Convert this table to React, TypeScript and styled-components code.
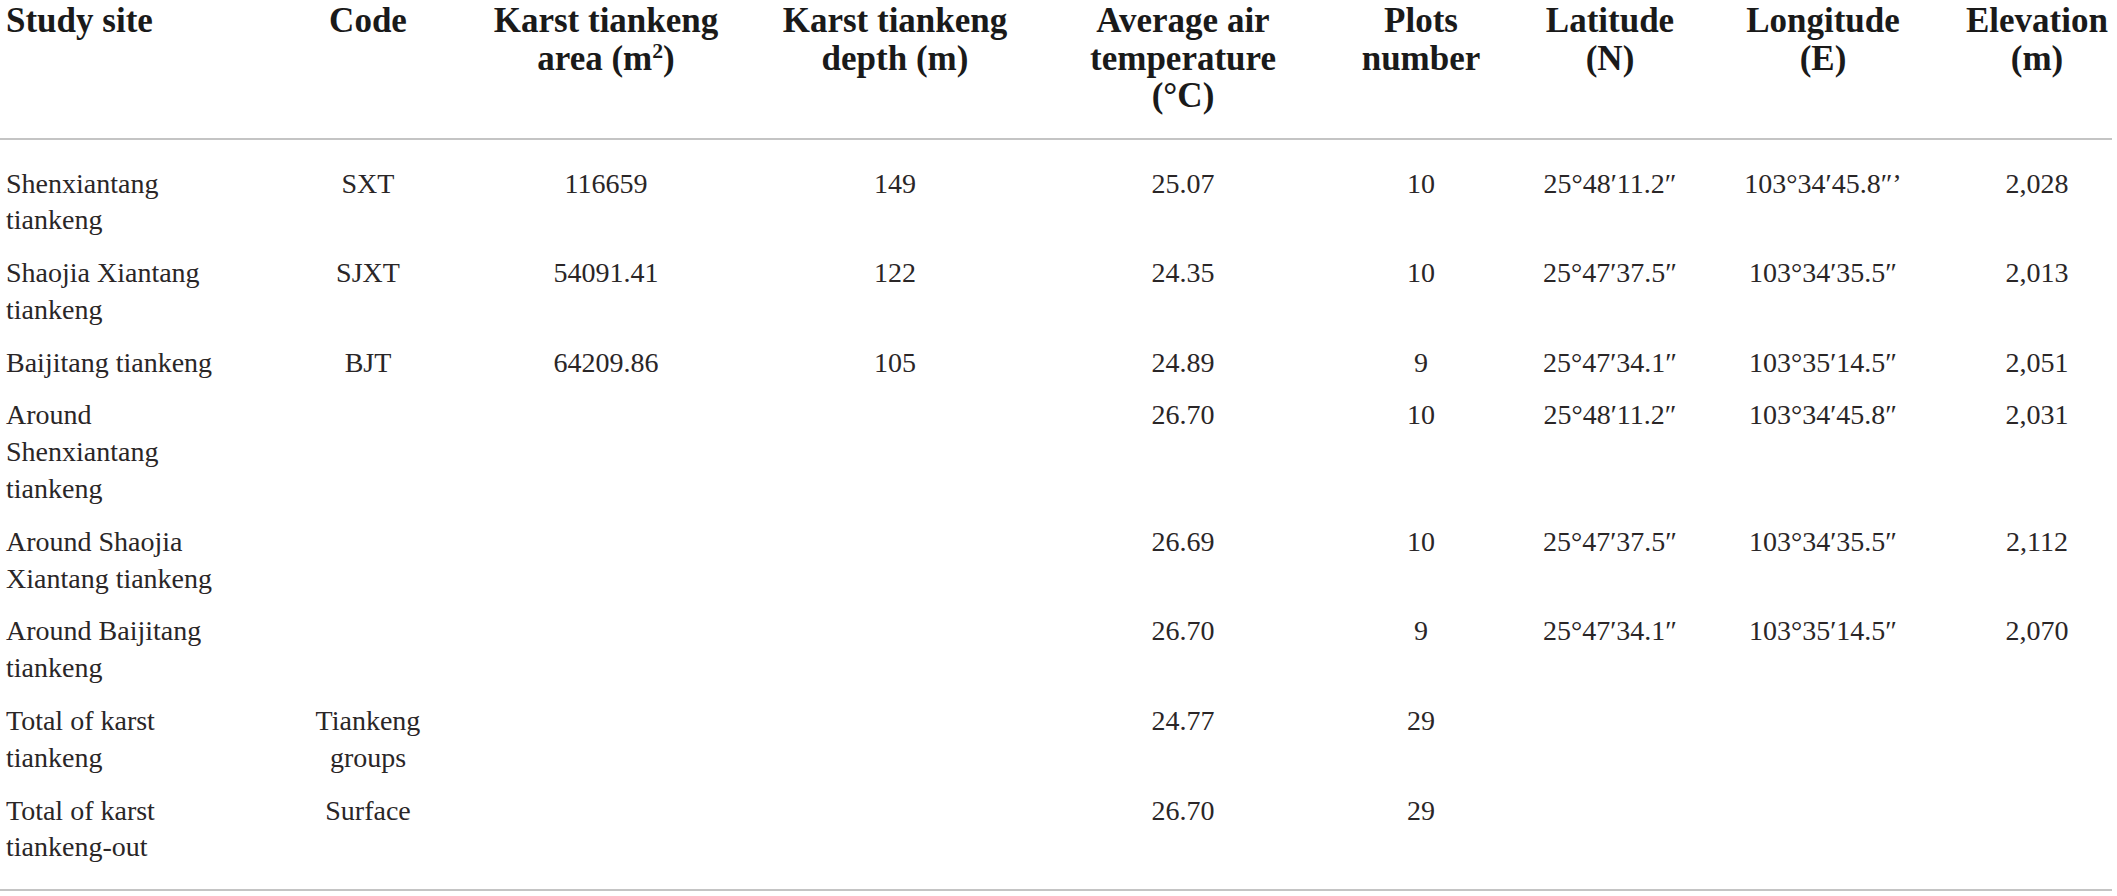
import React from 'react';
import styled, { createGlobalStyle } from 'styled-components';

const GlobalStyle = createGlobalStyle`
  html, body {
    margin: 0;
    padding: 0;
    background: #ffffff;
  }
  body {
    font-family: "Liberation Serif", "Times New Roman", serif;
    color: #231f20;
  }
`;

const Table = styled.table`
  width: 2112px;
  table-layout: fixed;
  border-collapse: collapse;
  border-bottom: 2px solid #c4c4c4;
`;

const HeadRow = styled.tr`
  border-bottom: 2px solid #c4c4c4;
`;

const HeadCell = styled.th<{ $align?: 'left' | 'center' }>`
  padding: 2px 0 23px ${(p) => (p.$align === 'left' ? '6px' : '0')};
  text-align: ${(p) => p.$align ?? 'center'};
  vertical-align: top;
  font-size: 35px;
  font-weight: 700;
  line-height: 37.5px;
  color: #1a1a1a;
  white-space: nowrap;

  sup {
    font-size: 0.62em;
    line-height: 0;
    vertical-align: 0.55em;
  }
`;

const BodyRow = styled.tr`
  &:first-child td {
    padding-top: 26px;
  }
  &:last-child td {
    padding-bottom: 23px;
  }
`;

const BodyCell = styled.td<{ $align?: 'left' | 'center' }>`
  padding: 8px 0 8px ${(p) => (p.$align === 'left' ? '6px' : '0')};
  text-align: ${(p) => p.$align ?? 'center'};
  vertical-align: top;
  font-size: 28px;
  line-height: 36.8px;
  color: #2a2627;
  white-space: nowrap;
`;

const widths = [254, 228, 248, 330, 246, 230, 148, 278, 150];

type Row = {
  site: string[];
  code?: string[];
  area?: string;
  depth?: string;
  temp: string;
  plots: string;
  lat?: string;
  lon?: string;
  elev?: string;
};

const rows: Row[] = [
  {
    site: ['Shenxiantang', 'tiankeng'],
    code: ['SXT'],
    area: '116659',
    depth: '149',
    temp: '25.07',
    plots: '10',
    lat: '25°48′11.2″',
    lon: '103°34′45.8″’',
    elev: '2,028',
  },
  {
    site: ['Shaojia Xiantang', 'tiankeng'],
    code: ['SJXT'],
    area: '54091.41',
    depth: '122',
    temp: '24.35',
    plots: '10',
    lat: '25°47′37.5″',
    lon: '103°34′35.5″',
    elev: '2,013',
  },
  {
    site: ['Baijitang tiankeng'],
    code: ['BJT'],
    area: '64209.86',
    depth: '105',
    temp: '24.89',
    plots: '9',
    lat: '25°47′34.1″',
    lon: '103°35′14.5″',
    elev: '2,051',
  },
  {
    site: ['Around', 'Shenxiantang', 'tiankeng'],
    temp: '26.70',
    plots: '10',
    lat: '25°48′11.2″',
    lon: '103°34′45.8″',
    elev: '2,031',
  },
  {
    site: ['Around Shaojia', 'Xiantang tiankeng'],
    temp: '26.69',
    plots: '10',
    lat: '25°47′37.5″',
    lon: '103°34′35.5″',
    elev: '2,112',
  },
  {
    site: ['Around Baijitang', 'tiankeng'],
    temp: '26.70',
    plots: '9',
    lat: '25°47′34.1″',
    lon: '103°35′14.5″',
    elev: '2,070',
  },
  {
    site: ['Total of karst', 'tiankeng'],
    code: ['Tiankeng', 'groups'],
    temp: '24.77',
    plots: '29',
  },
  {
    site: ['Total of karst', 'tiankeng-out'],
    code: ['Surface'],
    temp: '26.70',
    plots: '29',
  },
];

const Lines = ({ lines }: { lines?: string[] }) => (
  <>
    {(lines ?? []).map((line, i) => (
      <React.Fragment key={i}>
        {i > 0 && <br />}
        {line}
      </React.Fragment>
    ))}
  </>
);

const App = () => (
  <>
    <GlobalStyle />
    <Table>
      <colgroup>
        {widths.map((w, i) => (
          <col key={i} style={{ width: w }} />
        ))}
      </colgroup>
      <thead>
        <HeadRow>
          <HeadCell $align="left">Study site</HeadCell>
          <HeadCell>Code</HeadCell>
          <HeadCell>
            Karst tiankeng
            <br />
            area (m<sup>2</sup>)
          </HeadCell>
          <HeadCell>
            Karst tiankeng
            <br />
            depth (m)
          </HeadCell>
          <HeadCell>
            Average air
            <br />
            temperature
            <br />
            (°C)
          </HeadCell>
          <HeadCell>
            Plots
            <br />
            number
          </HeadCell>
          <HeadCell>
            Latitude
            <br />
            (N)
          </HeadCell>
          <HeadCell>
            Longitude
            <br />
            (E)
          </HeadCell>
          <HeadCell>
            Elevation
            <br />
            (m)
          </HeadCell>
        </HeadRow>
      </thead>
      <tbody>
        {rows.map((r, i) => (
          <BodyRow key={i}>
            <BodyCell $align="left">
              <Lines lines={r.site} />
            </BodyCell>
            <BodyCell>
              <Lines lines={r.code} />
            </BodyCell>
            <BodyCell>{r.area}</BodyCell>
            <BodyCell>{r.depth}</BodyCell>
            <BodyCell>{r.temp}</BodyCell>
            <BodyCell>{r.plots}</BodyCell>
            <BodyCell>{r.lat}</BodyCell>
            <BodyCell>{r.lon}</BodyCell>
            <BodyCell>{r.elev}</BodyCell>
          </BodyRow>
        ))}
      </tbody>
    </Table>
  </>
);

export default App;
